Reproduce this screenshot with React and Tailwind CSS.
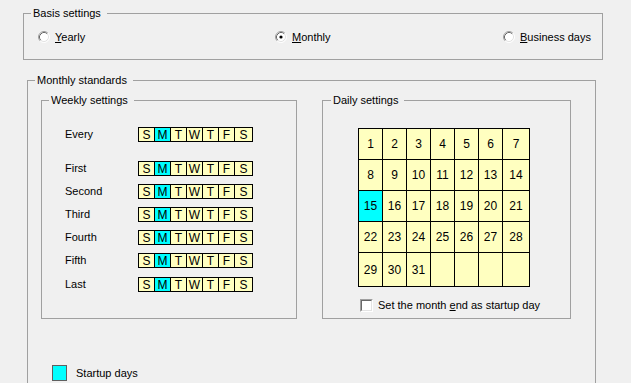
import React from "react";

function Radio({ checked }) {
  return (
    <svg width="12" height="12" viewBox="0 0 12 12" className="shrink-0">
      <circle cx="6" cy="6" r="5" fill="#ffffff" />
      <path d="M2.11 9.89 A5.5 5.5 0 0 1 9.89 2.11" fill="none" stroke="#a0a0a0" strokeWidth="1" />
      <path d="M9.89 2.11 A5.5 5.5 0 0 1 2.11 9.89" fill="none" stroke="#ffffff" strokeWidth="1" />
      <path d="M2.82 9.18 A4.5 4.5 0 0 1 9.18 2.82" fill="none" stroke="#696969" strokeWidth="1" />
      <path d="M9.18 2.82 A4.5 4.5 0 0 1 2.82 9.18" fill="none" stroke="#e3e3e3" strokeWidth="1" />
      {checked && <circle cx="6" cy="6" r="1.6" fill="#000000" />}
    </svg>
  );
}

const DAYS = ["S", "M", "T", "W", "T", "F", "S"];

function Strip() {
  return (
    <div className="flex h-[15px] border border-black bg-[#ffffc0] text-[12px] leading-none">
      {DAYS.map((d, i) => {
        let cls = "flex items-center justify-center ";
        if (i === 0) cls += "w-[15px]";
        else if (i === 6) cls += "w-[18px] border-l border-black";
        else cls += "w-[16px] border-l border-black";
        if (i === 1) cls += " bg-[#00ffff]";
        return (
          <div key={i} className={cls}>
            {d}
          </div>
        );
      })}
    </div>
  );
}

const ROWS = [
  { label: "Every", cls: "" },
  { label: "First", cls: "mt-[19px]" },
  { label: "Second", cls: "mt-[8px]" },
  { label: "Third", cls: "mt-[8px]" },
  { label: "Fourth", cls: "mt-[8px]" },
  { label: "Fifth", cls: "mt-[8px]" },
  { label: "Last", cls: "mt-[9px]" },
];

export default function App() {
  const cells = [];
  for (let i = 1; i <= 35; i++) cells.push(i);
  return (
    <div className="w-[631px] h-[383px] overflow-hidden bg-[#f0f0f0] text-[11px] leading-[13px] text-black font-['Liberation_Sans',Arial,sans-serif] flex flex-col">
      <fieldset className="ml-[23px] mt-[7px] w-[580px] shrink-0 border border-[#a0a0a0]">
        <legend className="ml-[7px] pl-[2px] pr-[6px]">Basis settings</legend>
        <div className="flex h-[14px] items-center pl-[14px] mt-[10px] mb-[15px]">
          <div className="flex w-[237px] items-center gap-[5px]">
            <Radio />
            <span>
              <span className="underline">Y</span>early
            </span>
          </div>
          <div className="flex w-[228px] items-center gap-[5px]">
            <Radio checked />
            <span>
              <span className="underline">M</span>onthly
            </span>
          </div>
          <div className="flex items-center gap-[5px]">
            <Radio />
            <span>
              <span className="underline">B</span>usiness days
            </span>
          </div>
        </div>
      </fieldset>

      <fieldset className="ml-[27px] mt-[14px] w-[569px] shrink-0 border border-[#a0a0a0]">
        <legend className="ml-[7px] pl-[2px] pr-[6px]">Monthly standards</legend>
        <div className="pl-[13px] pt-[7px] pb-[20px]">
          <div className="flex gap-[25px]">
            <fieldset className="w-[256px] h-[225px] border border-[#a0a0a0]">
              <legend className="ml-[7px] pl-[2px] pr-[6px]">Weekly settings</legend>
              <div className="flex flex-col pl-[23px] pt-[20px]">
                {ROWS.map((r) => (
                  <div key={r.label} className={"flex h-[15px] items-center " + r.cls}>
                    <span className="w-[73px]">{r.label}</span>
                    <Strip />
                  </div>
                ))}
              </div>
            </fieldset>

            <fieldset className="w-[249px] h-[225px] border border-[#a0a0a0]">
              <legend className="ml-[8px] pl-[2px] pr-[6px]">Daily settings</legend>
              <div className="pl-[35px] pt-[21px]">
                <div className="grid w-fit grid-cols-[24px_24px_24px_24px_24px_24px_27px] grid-rows-[31px_31px_31px_31px_34px] border-l border-t border-black text-[12px] leading-none">
                  {cells.map((n) => (
                    <div
                      key={n}
                      className={
                        "flex items-center justify-center border-b border-r border-black " +
                        (n === 15 ? "bg-[#00ffff]" : "bg-[#ffffc0]")
                      }
                    >
                      {n <= 31 ? n : ""}
                    </div>
                  ))}
                </div>
                <div className="mt-[12px] ml-[2px] flex items-center gap-[5px]">
                  <div className="h-[13px] w-[13px] border border-t-[#a0a0a0] border-l-[#a0a0a0] border-b-white border-r-white">
                    <div className="h-full w-full border border-t-[#696969] border-l-[#696969] border-b-[#e3e3e3] border-r-[#e3e3e3] bg-white" />
                  </div>
                  <span>
                    Set the month <span className="underline">e</span>nd as startup day
                  </span>
                </div>
              </div>
            </fieldset>
          </div>

          <div className="mt-[46px] ml-[11px] flex items-center gap-[9px]">
            <div className="h-[16px] w-[15px] border border-[#606060] bg-[#00ffff]" />
            <span>Startup days</span>
          </div>
        </div>
      </fieldset>
    </div>
  );
}
